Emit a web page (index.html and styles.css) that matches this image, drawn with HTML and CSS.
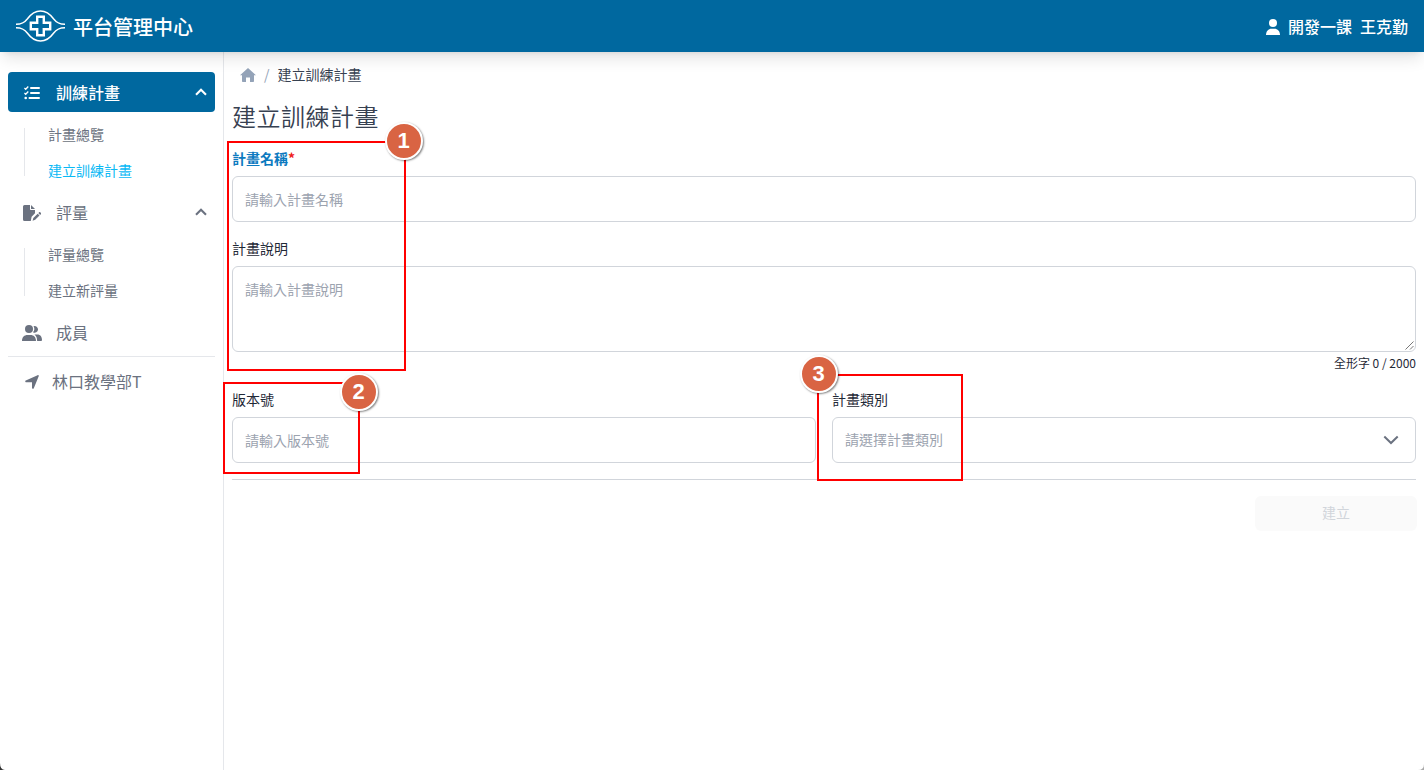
FILE: index.html
```html
<!DOCTYPE html>
<html lang="zh-Hant">
<head>
<meta charset="utf-8">
<title>平台管理中心</title>
<link rel="stylesheet" href="styles.css">
</head>
<body>
<div class="app">
  <header class="topbar">
    <div class="brand">
      <svg class="logo" width="50" height="32" viewBox="0 0 50 32" fill="none" stroke="#fff">
        <path stroke-width="1.500" d="M0 14.300c6 0 8.500-1.600 11.500-5.500C15 4 19 1 24.500 1s9.500 3 13 7.800c3 3.900 5.500 5.500 11.500 5.500M0 17.700c6 0 8.500 1.600 11.500 5.500C15 28 19 31 24.500 31s9.500-3 13-7.800c3-3.900 5.500-5.500 11.500-5.500"/>
        <path stroke-width="2.400" d="M21.200 6.700h6.600v6h6.400v6.600h-6.400v6h-6.600v-6h-6.400v-6.600h6.400z"/>
      </svg>
      <span class="brand-name">平台管理中心</span>
    </div>
    <div class="user">
      <svg class="person" width="14" height="16" viewBox="0 0 14 16" fill="#fff"><circle cx="7" cy="4" r="4"/><path d="M0 16c0-4 2.500-6.300 5.500-6.300h3c3 0 5.500 2.300 5.500 6.300z"/></svg>
      <span>開發一課</span><span>王克勤</span>
    </div>
  </header>
  <div class="body">
    <nav class="sidebar">
      <a class="item active">
        <svg class="icon" width="16" height="14" viewBox="0 0 16 14" fill="none" stroke="#fff"><path stroke-width="2" stroke-linecap="round" d="M7 2h8M7 7h8M5.500 12H15"/><path stroke-width="1.300" d="M.4 2l1.300 1.300L4.300.5M.4 7l1.300 1.300L4.300 5.500"/><circle cx="1.700" cy="12" r="1.300" fill="#fff" stroke="none"/></svg>
        <span class="item-text">訓練計畫</span>
        <svg class="caret" width="12" height="8" viewBox="0 0 12 8" fill="none" stroke="currentColor" stroke-width="2.100"><path d="M1 6.700l5-5 5 5"/></svg>
      </a>
      <div class="sub">
        <a>計畫總覽</a>
        <a class="current">建立訓練計畫</a>
      </div>
      <a class="item">
        <svg class="icon" width="18" height="16" viewBox="0 0 18 16" fill="#6b7280"><path d="M1.500 0H7v4.200c0 .5.300.8.800.8H12v3.300l-3.400 3.400L7.800 16H1.500A1.500 1.500 0 0 1 0 14.500v-13A1.500 1.500 0 0 1 1.500 0z"/><path d="M8 0l4 4H8zM15.300 8.100l.7-.7c.4-.4 1-.4 1.400 0l.4.400c.4.400.4 1 0 1.400l-.7.700zM14.700 8.700l1.800 1.800-4.300 4.300-2.600.9.700-2.700z"/></svg>
        <span class="item-text">評量</span>
        <svg class="caret" width="12" height="8" viewBox="0 0 12 8" fill="none" stroke="currentColor" stroke-width="2.100"><path d="M1 6.700l5-5 5 5"/></svg>
      </a>
      <div class="sub">
        <a>評量總覽</a>
        <a>建立新評量</a>
      </div>
      <a class="item">
        <svg class="icon" width="20" height="16" viewBox="0 0 20 16" fill="#6b7280"><circle cx="7" cy="4" r="4"/><path d="M0 16c0-4 2.300-6 5.500-6h3c3.200 0 5.500 2 5.500 6zM11 7.200a5 5 0 0 0 .5-5.900A3.300 3.300 0 1 1 11 7.200zM12.500 9.500h3c2.700 0 4.500 2.200 4.500 5.500 0 .6-.3 1-.9 1h-4c.1-2.900-.8-5-2.600-6.500z"/></svg>
        <span class="item-text">成員</span>
      </a>
      <div class="rule"></div>
      <a class="item place">
        <svg class="icon" width="14" height="14" viewBox="0 0 14 14" fill="#6b7280"><path d="M13.700 1.300L8.800 13.200c-.4 1-1.800.7-1.800-.4V7.200H1.300C.1 7.200-.2 5.800.8 5.400L12.600.2c.8-.3 1.500.3 1.100 1.100z"/></svg>
        <span class="item-text">林口教學部T</span>
      </a>
    </nav>
    <main class="main">
      <div class="crumbs">
        <svg class="home" width="16" height="14" viewBox="0 0 16 14" fill="#94a3b8"><path d="M8 0l8 7.300h-2V13c0 .6-.4 1-1 1h-3V9.500H6V14H3c-.6 0-1-.4-1-1V7.300H0z"/></svg>
        <span class="slash">/</span>
        <span>建立訓練計畫</span>
      </div>
      <h1 class="title">建立訓練計畫</h1>
      <form class="form">
        <label class="label required">計畫名稱<span class="star">*</span></label>
        <div class="control">請輸入計畫名稱</div>
        <label class="label gap">計畫說明</label>
        <div class="control area">請輸入計畫說明
          <svg class="grip" width="9" height="9" viewBox="0 0 9 9" stroke="#555" stroke-width=".8"><path d="M.5 8.500l8-8M5 8.500l3.500-3.500"/></svg>
        </div>
        <div class="count">全形字 0 / 2000</div>
        <div class="columns">
          <div>
            <label class="label">版本號</label>
            <div class="control">請輸入版本號</div>
          </div>
          <div>
            <label class="label">計畫類別</label>
            <div class="control select"><span>請選擇計畫類別</span>
              <svg width="16" height="10" viewBox="0 0 16 10" fill="none" stroke="#6b7280" stroke-width="2"><path d="M1.300 1.500L8 8l6.700-6.500"/></svg>
            </div>
          </div>
        </div>
        <div class="actions"><button class="submit" type="button" disabled>建立</button></div>
      </form>
    </main>
  </div>
  <div class="mark mark-one"><span class="badge">1</span></div>
  <div class="mark mark-two"><span class="badge">2</span></div>
  <div class="mark mark-three"><span class="badge">3</span></div>
  <svg class="corner corner-left" width="5" height="7" viewBox="0 0 5 7"><path d="M0 0Q0 7 5 7H0z" fill="#333"/></svg>
  <svg class="corner corner-right" width="6" height="6" viewBox="0 0 6 6"><path d="M6 0Q6 6 0 6H6z" fill="#aaa"/></svg>
</div>
</body>
</html>
```
FILE: styles.css
```css
* { box-sizing: border-box; }
body { margin: 0; font-family: "Noto Sans CJK TC", "Noto Sans", sans-serif; font-size: 14px; line-height: 20px; color: #374151; background: #fff; }
svg { flex: none; display: block; }
.app { position: relative; height: 770px; display: flex; flex-direction: column; overflow: hidden; }
.topbar { position: relative; z-index: 1; flex: none; height: 52px; padding: 0 16px; display: flex; align-items: center; justify-content: space-between; background: #00689f; color: #fff; box-shadow: 0 10px 15px -3px rgba(0,0,0,.1), 0 4px 6px -4px rgba(0,0,0,.1); }
.brand { display: flex; align-items: center; gap: 7px; }
.brand-name { padding-top: 1px; font-size: 20px; line-height: 28px; font-weight: 500; }
.user { display: flex; align-items: center; gap: 8px; font-size: 16px; line-height: 24px; font-weight: 500; }
.person { margin-top: 2px; }
.body { flex: 1; display: flex; min-height: 0; }
.sidebar { width: 224px; flex: none; padding: 20px 8px 0; border-right: 1px solid #e5e7eb; color: #6b7280; }
.item { height: 40px; display: grid; grid-template-columns: 48px 1fr auto; align-items: center; padding-right: 8px; border-radius: 4px; font-size: 16px; line-height: 24px; }
.icon { justify-self: center; margin-top: 2px; }
.active { background: #00689f; color: #fff; font-weight: 500; }
.sub { margin: 4px 0; padding-left: 40px; display: flex; flex-direction: column; background: linear-gradient(#e5e7eb, #e5e7eb) 16px 12px / 1px 48px no-repeat; }
.sub a { height: 36px; line-height: 36px; }
.sub .current { color: #0ab9f5; }
.rule { height: 1px; margin: 4px 0; background: #e5e7eb; }
.place { grid-template-columns: 44px 1fr; }
.place .icon { margin-left: 4px; }
.main { flex: 1; min-width: 0; padding: 12px 8px 0; }
.crumbs { display: flex; align-items: center; height: 20px; padding-left: 8px; gap: 8px; }
.home { margin-top: 2px; }
.slash { color: #94a3b8; }
.title { margin: 16px 0; font-size: 24px; line-height: 32px; font-weight: 350; color: #374151; letter-spacing: .5px; }
.form { display: flex; flex-direction: column; }
.label { display: block; height: 28px; line-height: 20px; color: #1f2937; }
.required { font-weight: 700; color: #0c7abf; }
.star { color: #ef2020; }
.gap { margin-top: 16px; }
.control { position: relative; height: 46px; padding: 12px; border: 1px solid #d1d5db; border-radius: 6px; background: #fff; color: #9ca3af; line-height: 21px; }
.area { height: 86px; }
.grip { position: absolute; right: 1px; bottom: 1px; }
.count { height: 20px; margin-top: 1px; text-align: right; font-size: 12px; color: #1f2937; }
.columns { display: grid; grid-template-columns: 1fr 1fr; gap: 16px; margin-top: 16px; padding-bottom: 16px; border-bottom: 1px solid #d1d5db; }
.select { display: flex; align-items: center; justify-content: space-between; padding: 11px 16px 11px 12px; }
.select span { padding-bottom: 1px; }
.actions { display: flex; justify-content: flex-end; margin: 16px -1px 0 0; }
.submit { width: 162px; height: 34px; padding: 0 0 2px; border: 0; border-radius: 6px; background: #fafafa; color: #d1d5db; font: inherit; box-shadow: 0 1px 1px rgba(0,0,0,.02); }
.mark { position: absolute; z-index: 2; border: 2px solid #f00; }
.badge { position: absolute; width: 38px; height: 38px; border: 2px solid #fff; border-radius: 50%; background: #d96443; color: #fff; text-align: center; font: bold 22px/34px "Liberation Sans", Arial, sans-serif; box-shadow: 1px 1px 2px rgba(0,0,0,.5); }
.mark-one { left: 227px; top: 141px; width: 179px; height: 230px; }
.mark-one .badge { left: 155.5px; top: -21px; }
.mark-two { left: 223px; top: 382px; width: 137px; height: 92px; }
.mark-two .badge { left: 114.5px; top: -11px; }
.mark-three { left: 817px; top: 374px; width: 146px; height: 107px; }
.mark-three .badge { left: -19.5px; top: -21px; }
.corner { position: absolute; bottom: 0; }
.corner-left { left: 0; }
.corner-right { right: 0; }
```
